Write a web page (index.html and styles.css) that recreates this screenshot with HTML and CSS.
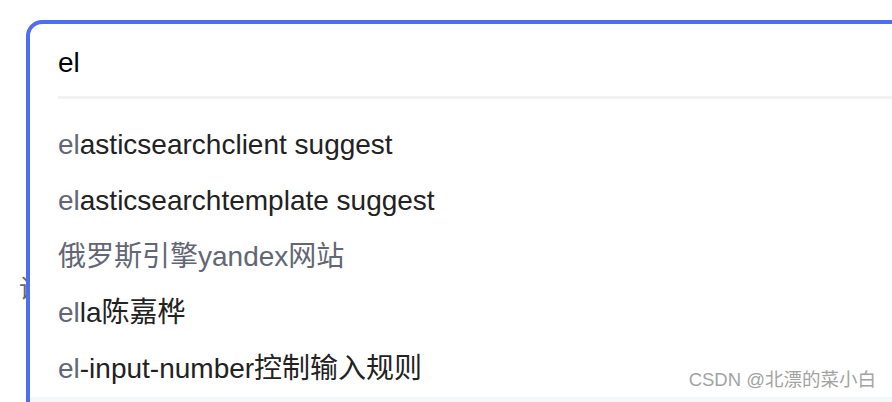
FILE: index.html
```html
<!DOCTYPE html>
<html lang="zh-CN">
<head>
<meta charset="utf-8">
<title>搜索建议</title>
<link rel="stylesheet" href="styles.css">
</head>
<body>
<div class="page">
  <span class="behind">设</span>
  <div class="search-box">
    <div class="query">el</div>
    <div class="divider"></div>
    <ul class="sug-list">
      <li class="sug"><span class="hl">el</span>asticsearchclient suggest</li>
      <li class="sug"><span class="hl">el</span>asticsearchtemplate suggest</li>
      <li class="sug muted">俄罗斯引擎yandex网站</li>
      <li class="sug"><span class="hl">el</span>la陈嘉桦</li>
      <li class="sug"><span class="hl">el</span>-input-number控制输入规则</li>
      <li class="sug active"></li>
    </ul>
  </div>
  <div class="watermark">CSDN @北漂的菜小白</div>
</div>
</body>
</html>
```
FILE: styles.css
```css
html, body {
  margin: 0;
  padding: 0;
  overflow: hidden;
  background: #fff;
}
.page {
  position: relative;
  width: 892px;
  height: 402px;
  overflow: hidden;
  font-family: "Liberation Sans", "Noto Sans CJK SC", sans-serif;
}
.behind {
  position: absolute;
  left: 19px;
  top: 268px;
  font-size: 26px;
  color: #666;
  font-family: "Noto Sans CJK SC", sans-serif;
}
.search-box {
  position: relative;
  margin: 20px 0 0 26px;
  width: 920px;
  border: 4px solid #4e6ef2;
  border-radius: 16px;
  background: #fff;
}
.query {
  box-sizing: border-box;
  height: 72px;
  padding: 23px 0 0 28px;
  font-size: 28px;
  line-height: 32px;
  color: #000;
}
.divider {
  height: 3px;
  margin-left: 28px;
  background: #f2f2f2;
}
.sug-list {
  list-style: none;
  margin: 0;
  padding: 18px 0 0;
}
.sug {
  padding-left: 28px;
  height: 56px;
  font-size: 28px;
  line-height: 56px;
  color: #222;
  white-space: nowrap;
}
.sug .hl,
.sug.muted {
  color: #626675;
}
.sug.active {
  background: #f5f6fa;
}
.watermark {
  position: absolute;
  right: 16px;
  top: 367px;
  font-size: 18.5px;
  line-height: 26px;
  color: #a3a3a3;
  text-shadow: 1px 1px 0 #fff, -1px -1px 0 #fff;
}
```
